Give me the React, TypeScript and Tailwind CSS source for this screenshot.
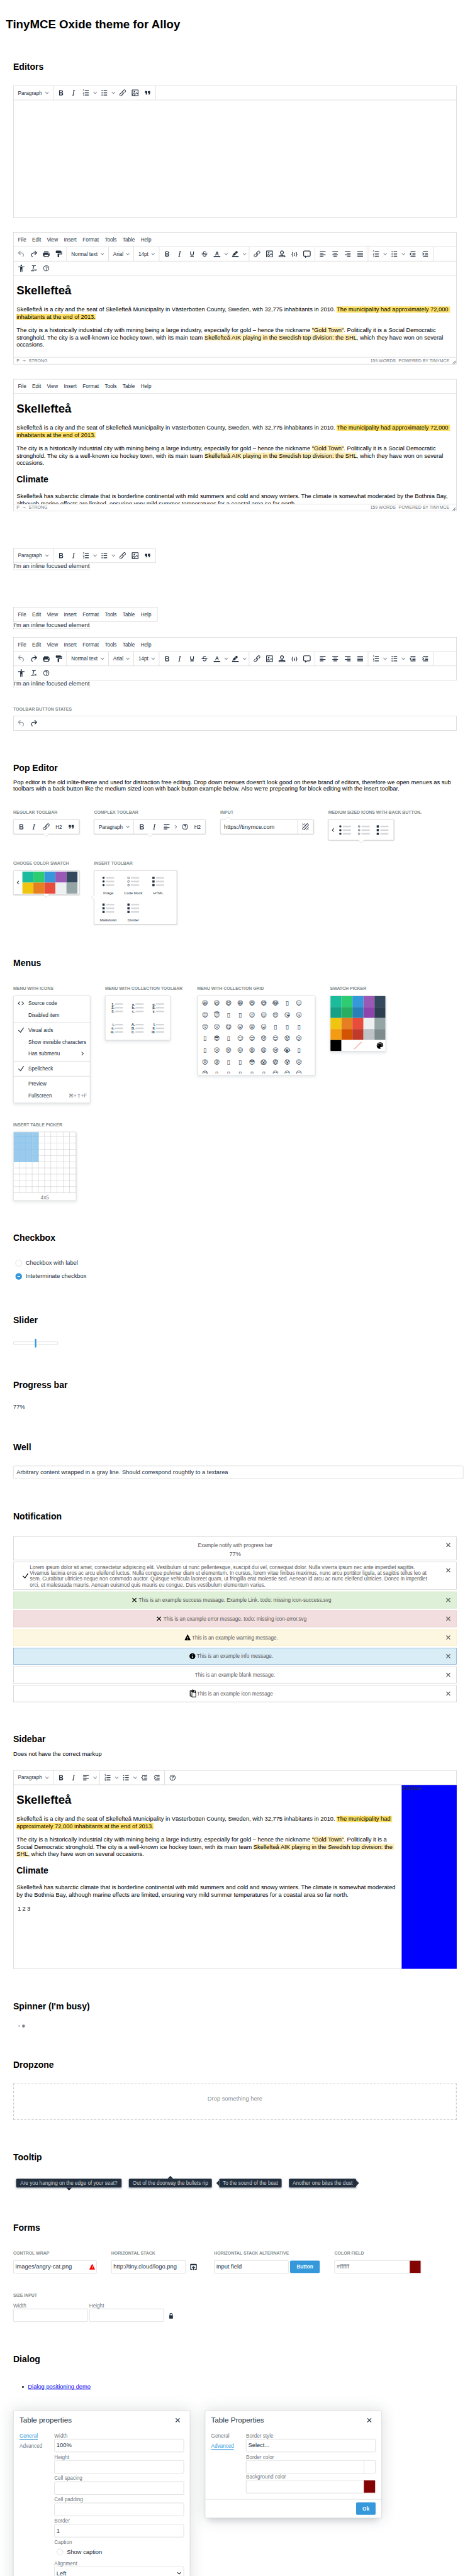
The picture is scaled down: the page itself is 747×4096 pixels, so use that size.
import React from "react";

const INK = "text-[#222f3e]";

/* ---------- icons ---------- */

const PATHS: Record<string, string> = {
  bold: "M7.8 19c-.3 0-.5 0-.6-.2l-.2-.5V5.7c0-.2 0-.4.2-.5l.6-.2h5c1.5 0 2.7.3 3.5 1 .7.6 1.1 1.4 1.1 2.5a3 3 0 01-.6 1.9c-.4.6-1 1-1.6 1.2.4.1.9.3 1.3.6s.8.7 1 1.2c.4.4.5 1 .5 1.6 0 1.3-.4 2.3-1.3 3-.8.7-2.1 1-3.8 1H7.8zm5-8.3c.6 0 1.2-.1 1.6-.5.4-.3.6-.7.6-1.3 0-1.1-.8-1.7-2.3-1.7H9.3v3.5h3.4zm.5 6c.7 0 1.3-.1 1.7-.4.4-.4.6-.9.6-1.5s-.2-1-.7-1.4c-.4-.3-1-.4-2-.4H9.4v3.8h4z",
  italic: "M16.7 4.7l-.1.9h-.3c-.6 0-1 0-1.4.3-.3.3-.4.6-.5 1.1l-2.1 9.8v.6c0 .5.4.8 1.4.8h.2l-.2.8H8l.2-.8h.2c1.1 0 1.8-.5 2-1.5l2-9.8.1-.5c0-.6-.4-.8-1.4-.8h-.3l.2-.9h5.8z",
  underline: "M16 5c.6 0 1 .4 1 1v5.5a4 4 0 01-.4 1.8l-1 1.4a5.3 5.3 0 01-5.5 1 5 5 0 01-1.6-1c-.5-.4-.8-.9-1.1-1.4a4 4 0 01-.4-1.8V6c0-.6.4-1 1-1s1 .4 1 1v5.5c0 .3 0 .6.2 1l.6.7a3.3 3.3 0 002.2.8 3.4 3.4 0 002.2-.8c.3-.2.4-.5.6-.8l.2-.9V6c0-.6.4-1 1-1zM8 17h8c.6 0 1 .4 1 1s-.4 1-1 1H8a1 1 0 010-2z",
  strike: "M15.6 8.5c-.5-.7-1-1.1-1.3-1.3-.6-.4-1.3-.6-2-.6-2.7 0-2.8 1.7-2.8 2.1 0 1.6 1.8 2 3.2 2.3 4.4.9 4.6 2.8 4.6 3.9 0 1.4-.7 4.1-5 4.1A6.2 6.2 0 017 16.4l1.5-1.1c.4.6 1.6 2 3.7 2 1.6 0 2.5-.4 3-1.2.4-.8.3-2-.8-2.6-.7-.4-1.6-.7-2.9-1-1-.2-3.9-.8-3.9-3.6C7.6 6 10.3 5 12.4 5c2.9 0 4.2 1.6 4.7 2.4l-1.5 1.1zM5 11h14a1 1 0 010 2H5a1 1 0 010-2z",
  left: "M5 5h14a1 1 0 010 2H5a1 1 0 010-2zm0 4h8a1 1 0 010 2H5a1 1 0 010-2zm0 8h8a1 1 0 010 2H5a1 1 0 010-2zm0-4h14a1 1 0 010 2H5a1 1 0 010-2z",
  center: "M5 5h14a1 1 0 010 2H5a1 1 0 010-2zm3 4h8a1 1 0 010 2H8a1 1 0 010-2zm0 8h8a1 1 0 010 2H8a1 1 0 010-2zm-3-4h14a1 1 0 010 2H5a1 1 0 010-2z",
  right: "M5 5h14a1 1 0 010 2H5a1 1 0 010-2zm6 4h8a1 1 0 010 2h-8a1 1 0 010-2zm0 8h8a1 1 0 010 2h-8a1 1 0 010-2zm-6-4h14a1 1 0 010 2H5a1 1 0 010-2z",
  justify: "M5 5h14a1 1 0 010 2H5a1 1 0 010-2zm0 4h14a1 1 0 010 2H5a1 1 0 010-2zm0 4h14a1 1 0 010 2H5a1 1 0 010-2zm0 4h14a1 1 0 010 2H5a1 1 0 010-2z",
  ul: "M11 5h8a1 1 0 010 2h-8a1 1 0 010-2zm0 6h8a1 1 0 010 2h-8a1 1 0 010-2zm0 6h8a1 1 0 010 2h-8a1 1 0 010-2zM4.500 6a1.500 1.500 0 103 0 1.500 1.500 0 00-3 0zm0 6a1.500 1.500 0 103 0 1.500 1.500 0 00-3 0zm0 6a1.500 1.500 0 103 0 1.500 1.500 0 00-3 0z",
  outdent: "M7 5h12a1 1 0 010 2H7a1 1 0 010-2zm5 4h7a1 1 0 010 2h-7a1 1 0 010-2zm0 4h7a1 1 0 010 2h-7a1 1 0 010-2zm-5 4h12a1 1 0 010 2H7a1 1 0 010-2zm1.400-8.400a1 1 0 01-.1 1.400l-2 2 2 2a1 1 0 11-1.400 1.400L3.500 12l3.400-3.400a1 1 0 011.500 0z",
  indent: "M7 5h12a1 1 0 010 2H7a1 1 0 010-2zm5 4h7a1 1 0 010 2h-7a1 1 0 010-2zm0 4h7a1 1 0 010 2h-7a1 1 0 010-2zm-5 4h12a1 1 0 010 2H7a1 1 0 010-2zM4.600 8.600a1 1 0 011.500 0L9.500 12l-3.400 3.400A1 1 0 114.700 14l2-2-2-2a1 1 0 01-.1-1.400z",
  undo: "M6.4 8H12c3.7 0 6.2 2 6.8 5.1.6 2.7-.4 5.6-2.3 6.8a1 1 0 01-1-1.8c1.1-.6 1.8-2.7 1.4-4.6-.5-2.1-2.1-3.5-4.9-3.5H6.4l3.3 3.3a1 1 0 11-1.4 1.4l-5-5a1 1 0 010-1.4l5-5a1 1 0 011.4 1.4L6.4 8z",
  redo: "M17.6 10H12c-2.8 0-4.4 1.4-4.9 3.5-.4 2 .3 4 1.4 4.6a1 1 0 11-1 1.8c-2-1.2-2.9-4.1-2.3-6.8.6-3 3-5.1 6.8-5.1h5.6l-3.3-3.3a1 1 0 111.4-1.4l5 5a1 1 0 010 1.4l-5 5a1 1 0 01-1.4-1.4l3.3-3.3z",
  print: "M18 8H6a3 3 0 00-3 3v6h2v3h14v-3h2v-6a3 3 0 00-3-3zm-1 10H7v-4h10v4zm.5-5c-.8 0-1.5-.7-1.5-1.5s.7-1.5 1.5-1.5 1.5.7 1.5 1.5-.7 1.5-1.5 1.5zm.5-8H6v2h12V5z",
  painter: "M18 5V4c0-.5-.4-1-1-1H5a1 1 0 00-1 1v4c0 .6.5 1 1 1h12c.6 0 1-.4 1-1V7h1v4H9v9c0 .6.4 1 1 1h2c.6 0 1-.4 1-1v-7h8V5h-3z",
  textcolor: "M3 18h18v3H3zM8.7 16h-.8a.5.5 0 01-.5-.6l2.7-9c.1-.3.3-.4.5-.4h2.8c.2 0 .4.1.5.4l2.7 9a.5.5 0 01-.5.6h-.8a.5.5 0 01-.4-.4l-.7-2.2c0-.3-.3-.4-.5-.4h-3.4c-.2 0-.4.1-.5.4l-.7 2.2c0 .3-.2.4-.4.4zm2.6-7.6l-.6 2a.5.5 0 00.5.6h1.6a.5.5 0 00.5-.6l-.6-2c0-.3-.3-.4-.5-.4h-.4c-.2 0-.4.1-.5.4z",
  highlight: "M3 18h18v3H3zM7.7 16.7H3l3.3-3.3-.7-.8L10.2 8l4 4.1-4 4.2c-.2.2-.6.2-.8 0l-.6-.7-1.1 1.1zm5-7.5L11 7.4l3-2.9a2 2 0 012.6 0L18 6c.7.7.7 2 0 2.7l-2.9 2.9-1.8-1.8-.5-.6z",
  link: "M6.2 12.3a1 1 0 011.4 1.4l-2.1 2a2 2 0 102.7 2.8l4.8-4.8a1 1 0 000-1.4 1 1 0 111.4-1.3 2.9 2.9 0 010 4L9.6 20a3.9 3.9 0 01-5.5-5.5l2-2zm11.6-.6a1 1 0 01-1.4-1.4l2-2a2 2 0 10-2.6-2.8L11 10.3a1 1 0 000 1.4A1 1 0 119.6 13a2.9 2.9 0 010-4L14.4 4a3.9 3.9 0 015.5 5.5l-2 2z",
  unlink: "M6.2 12.3a1 1 0 011.4 1.4l-2 2a2 2 0 102.6 2.8l4.8-4.8a1 1 0 000-1.4 1 1 0 111.4-1.3 2.9 2.9 0 010 4L9.6 20a3.9 3.9 0 01-5.5-5.5l2-2zm11.6-.6a1 1 0 01-1.4-1.4l2.1-2a2 2 0 10-2.7-2.8L11 10.3a1 1 0 000 1.4A1 1 0 119.6 13a2.9 2.9 0 010-4L14.4 4a3.9 3.9 0 015.5 5.5l-2 2zM7.6 6.3a.8.8 0 01-1 1.1L3.3 4.2a.7.7 0 111-1l3.2 3.1zM5.1 8.6a.8.8 0 010 1.5H3a.8.8 0 010-1.5H5zm5-3.5a.8.8 0 01-1.5 0V3a.8.8 0 011.5 0V5zm6 11.8a.8.8 0 011-1l3.2 3.2a.8.8 0 01-1 1L16 17zm-2.2 2a.8.8 0 011.5 0V21a.8.8 0 01-1.5 0V19zm5-3.5a.7.7 0 110-1.5H21a.8.8 0 010 1.5H19z",
  image: "M5 15.7l3.3-3.2c.3-.3.7-.3 1 0L12 15l4.1-4c.3-.4.8-.4 1 0l2 1.9V5H5v10.7zM5 18V19h3l2.8-2.9-2-2L5 17.9zm14-3l-2.5-2.4-6.4 6.5H19v-4zM4 3h16c.6 0 1 .4 1 1v16c0 .6-.4 1-1 1H4a1 1 0 01-1-1V4c0-.6.4-1 1-1zm6 8a2 2 0 100-4 2 2 0 000 4z",
  quote: "M7.5 17h.9c.4 0 .7-.2.9-.6L11 13V8c0-.6-.4-1-1-1H6a1 1 0 00-1 1v4c0 .6.4 1 1 1h2l-1.3 2.7a1 1 0 00.8 1.3zm8 0h.9c.4 0 .7-.2.9-.6L19 13V8c0-.6-.4-1-1-1h-4a1 1 0 00-1 1v4c0 .6.4 1 1 1h2l-1.3 2.7a1 1 0 00.8 1.3z",
  stamp: "M19 19v-1H5v1h14zM9 16v-4a5 5 0 116 0v4h4a2 2 0 012 2v3H3v-3c0-1.1.9-2 2-2h4zm4 0v-5l.8-.6a3 3 0 10-3.6 0l.8.6v5h2z",
  codesample: "M7.1 11a2.8 2.8 0 01-.8 2 2.8 2.8 0 01.8 2v1.7c0 .3.1.6.4.8.2.3.5.4.8.4.3 0 .4.2.4.4v.8c0 .2-.1.4-.4.4-.7 0-1.4-.3-2-.8-.5-.6-.8-1.3-.8-2V15c0-.3-.1-.6-.4-.8-.2-.3-.5-.4-.8-.4a.4.4 0 01-.4-.4v-.8c0-.2.2-.4.4-.4.3 0 .6-.1.8-.4.3-.2.4-.5.4-.8V9.3c0-.7.3-1.4.8-2 .6-.5 1.3-.8 2-.8.3 0 .4.2.4.4v.8c0 .2-.1.4-.4.4-.3 0-.6.1-.8.4-.3.2-.4.5-.4.8V11zm9.8 0V9.3c0-.3-.1-.6-.4-.8-.2-.3-.5-.4-.8-.4a.4.4 0 01-.4-.4V7c0-.2.1-.4.4-.4.7 0 1.4.3 2 .8.5.6.8 1.3.8 2V11c0 .3.1.6.4.8.2.3.5.4.8.4.2 0 .4.2.4.4v.8c0 .2-.2.4-.4.4-.3 0-.6.1-.8.4-.3.2-.4.5-.4.8v1.7c0 .7-.3 1.4-.8 2-.6.5-1.3.8-2 .8a.4.4 0 01-.4-.4v-.8c0-.2.1-.4.4-.4.3 0 .6-.1.8-.4.3-.2.4-.5.4-.8V15a2.8 2.8 0 01.8-2 2.8 2.8 0 01-.8-2zm-3.3-.4c0 .4-.1.8-.5 1.1-.3.3-.7.5-1.1.5-.4 0-.8-.2-1.1-.5-.4-.3-.5-.7-.5-1.1 0-.5.1-.9.5-1.2.3-.3.7-.4 1.1-.4.4 0 .8.1 1.1.4.4.3.5.7.5 1.2zM12 13c.4 0 .8.1 1.1.5.4.3.5.7.5 1.1 0 1-.1 1.6-.5 2a3 3 0 01-1.1 1c-.4.3-.8.4-1.1.4a.5.5 0 01-.5-.5V17a3 3 0 001-.2l.6-.6c-.6 0-1-.2-1.3-.5-.2-.3-.3-.7-.3-1 0-.5.1-1 .5-1.2.3-.4.7-.5 1.1-.5z",
  comment: "M9 19l3-2h7c.6 0 1-.4 1-1V6c0-.6-.4-1-1-1H5a1 1 0 00-1 1v10c0 .6.4 1 1 1h4v2zm-2 4v-4H5a3 3 0 01-3-3V6a3 3 0 013-3h14a3 3 0 013 3v10a3 3 0 01-3 3h-6.4L7 23z",
  a11y: "M12 2a2 2 0 012 2 2 2 0 01-2 2 2 2 0 01-2-2c0-1.1.9-2 2-2zm8 7h-5v12c0 .6-.4 1-1 1a1 1 0 01-1-1v-5c0-.6-.4-1-1-1a1 1 0 00-1 1v5c0 .6-.4 1-1 1a1 1 0 01-1-1V9H4a1 1 0 110-2h16c.6 0 1 .4 1 1s-.4 1-1 1z",
  clear: "M13.2 6a1 1 0 010 .2l-2.6 10a1 1 0 01-1 .8h-.2a.8.8 0 01-.8-1l2.6-10H8a1 1 0 110-2h9a1 1 0 010 2h-3.8zM5 18h7a1 1 0 010 2H5a1 1 0 010-2zm13 1.5L16.5 18 15 19.5a.7.7 0 01-1-1l1.5-1.5-1.5-1.5a.7.7 0 011-1l1.5 1.5 1.5-1.5a.7.7 0 011 1L17.5 17l1.5 1.5a.7.7 0 01-1 1z",
  help: "M12 5.5a6.5 6.5 0 00-6 9 6.3 6.3 0 001.4 2l1 1a6.3 6.3 0 003.6 1 6.5 6.5 0 006-9 6.3 6.3 0 00-1.4-2l-1-1a6.3 6.3 0 00-3.6-1zM12 4a7.8 7.8 0 015.7 2.3A8 8 0 1112 4zM9.6 9.7a.7.7 0 01-.7-.8c0-1.1 1.5-1.8 3.2-1.8 1.8 0 3.2.8 3.2 2.4 0 1.4-.4 2.1-1.5 2.8-.2 0-.3.1-.3.2a2 2 0 00-.8.8.8.8 0 01-1.4-.6c.3-.7.8-1 1.3-1.5l.4-.2c.7-.4.8-.6.8-1.5 0-.5-.6-.9-1.7-.9-.5 0-1 .1-1.4.3-.2 0-.3.1-.3.2v-.2c0 .4-.4.8-.8.8zM11 16a1 1 0 102 0 1 1 0 00-2 0z",
  check: "M18.2 5.4a1 1 0 011.6 1.2l-8 12a1 1 0 01-1.5.1l-5-5a1 1 0 111.4-1.4l4.1 4.1 7.4-11z",
  close: "M17.3 8.2L13.4 12l3.9 3.8a1 1 0 01-1.5 1.5L12 13.4l-3.8 3.9a1 1 0 01-1.5-1.5l3.9-3.8-3.9-3.8a1 1 0 011.5-1.5l3.8 3.9 3.8-3.9a1 1 0 011.5 1.5z",
  source: "M9.8 15.7c.3.3.3.8 0 1-.3.4-.9.4-1.2 0l-4.4-4.1a.8.8 0 010-1.2l4.4-4.2c.3-.3.9-.3 1.2 0 .3.3.3.8 0 1.1L6 12l3.8 3.7zM14.2 15.7c-.3.3-.3.8 0 1 .4.4.9.4 1.2 0l4.4-4.1c.3-.3.3-.9 0-1.2l-4.4-4.2a.8.8 0 00-1.2 0c-.3.3-.3.8 0 1.1L18 12l-3.8 3.7z",
  warning: "M19.8 18.3c.2.5.3.9 0 1.2-.1.3-.5.5-1 .5H5.2c-.5 0-.9-.2-1-.5-.3-.3-.2-.7 0-1.2L11 4.7l.5-.5.5-.2c.2 0 .3 0 .5.2.2 0 .3.3.5.5l6.8 13.6zM12 18c.3 0 .5-.1.7-.3.2-.2.3-.4.3-.7a1 1 0 00-.3-.7 1 1 0 00-.7-.3 1 1 0 00-.7.3 1 1 0 00-.3.7c0 .3.1.5.3.7.2.2.4.3.7.3zm.7-3l.3-4a1 1 0 00-.3-.7 1 1 0 00-.7-.3 1 1 0 00-.7.3 1 1 0 00-.3.7l.3 4h1.4z",
  info: "M12 4a7.8 7.8 0 015.7 2.3A8 8 0 1112 4zm-1 3v2h2V7h-2zm3 10v-1h-1v-5h-3v1h1v4h-1v1h4z",
  paste: "M18 9V5h-2v1c0 .6-.4 1-1 1H9a1 1 0 01-1-1V5H6v13h3V9h9zM9 20H6a2 2 0 01-2-2V5c0-1.1.9-2 2-2h3.2A3 3 0 0112 1a3 3 0 012.8 2H18a2 2 0 012 2v4h1v12.1c0 .5-.4.9-.9.9h-10a1 1 0 01-1-1V20zm1.5-9.5v9.9h9v-9.9h-9zM12 3a1 1 0 00-1 1c0 .5.4 1 1 1s1-.5 1-1-.4-1-1-1z",
  browse: "M19 4a2 2 0 012 2v12a2 2 0 01-2 2h-4v-2h4V8H5v10h4v2H5a2 2 0 01-2-2V6c0-1.1.9-2 2-2h14zm-8 9.4l-2.3 2.3a1 1 0 11-1.4-1.4l4-4a1 1 0 011.4 0l4 4a1 1 0 01-1.4 1.4L13 13.4V20a1 1 0 01-2 0v-6.6z",
  lock: "M16.3 11c.2 0 .3 0 .5.2l.2.6v7.4c0 .3 0 .4-.2.6l-.6.2H7.8c-.3 0-.4 0-.6-.2a.7.7 0 01-.2-.6v-7.4c0-.3 0-.4.2-.6l.5-.2H8V8c0-.8.3-1.5.9-2.1.6-.6 1.3-.9 2.1-.9h2c.8 0 1.5.3 2.1.9.6.6.9 1.3.9 2.1v3h.3zM10 8v3h4V8a1 1 0 00-.3-.7A1 1 0 0013 7h-2a1 1 0 00-.7.3 1 1 0 00-.3.7z",
  palette: "M12 3a9 9 0 000 18 1.5 1.5 0 001.1-2.5c-.2-.3-.4-.6-.4-1 0-.8.7-1.5 1.5-1.5H16a5 5 0 005-5c0-4.4-4-8-9-8zm-5.500 9a1.500 1.500 0 110-3 1.500 1.500 0 010 3zm3-4a1.500 1.500 0 110-3 1.500 1.500 0 010 3zm5 0a1.500 1.500 0 110-3 1.500 1.500 0 010 3zm3 4a1.500 1.500 0 110-3 1.500 1.500 0 010 3z",
};

const SOLID = ["close", "link", "unlink", "strike"];

function Icon({ name, className = "" }: { name: string; className?: string }) {
  if (name === "ol") {
    return (
      <svg width="24" height="24" viewBox="0 0 24 24" fill="currentColor" className={className}>
        <path d="M10 5h9a1 1 0 010 2h-9a1 1 0 010-2zm0 6h9a1 1 0 010 2h-9a1 1 0 010-2zm0 6h9a1 1 0 010 2h-9a1 1 0 010-2z" />
        <g fontSize="6.5" fontWeight="700" fontFamily="Liberation Sans">
          <text x="4" y="8">1</text>
          <text x="4" y="14.3">2</text>
          <text x="4" y="20.6">3</text>
        </g>
      </svg>
    );
  }
  return (
    <svg width="24" height="24" viewBox="0 0 24 24" fill="currentColor" className={className}>
      <path d={PATHS[name]} fillRule={SOLID.includes(name) ? "nonzero" : "evenodd"} />
    </svg>
  );
}

function Chevron({ dir = "down", className = "" }: { dir?: "down" | "left" | "right"; className?: string }) {
  const turn = dir === "down" ? "" : dir === "left" ? "rotate-90" : "-rotate-90";
  return (
    <svg width="10" height="10" viewBox="0 0 10 10" fill="currentColor" className={`shrink-0 ${turn} ${className}`}>
      <path d="M8.7 2.2c.3-.3.8-.3 1 0 .4.4.4.9 0 1.2L5.7 7.8c-.3.3-.9.3-1.2 0L.2 3.4a.8.8 0 010-1.2c.3-.3.8-.3 1.1 0L5 6l3.7-3.8z" />
    </svg>
  );
}

function ListIcon({ kind, marks }: { kind: "disc" | "circle" | "square" | "text"; marks?: string[] }) {
  return (
    <svg width="48" height="48" viewBox="0 0 48 48" className="shrink-0 fill-[#222f3e]">
      {[14, 24, 34].map((y, i) => (
        <g key={y}>
          <rect x="18" y={y - 2} width="22" height="4" opacity=".2" />
          {kind === "disc" && <circle cx="11" cy={y} r="3" />}
          {kind === "circle" && <circle cx="11" cy={y} r="2.4" fill="none" stroke="#222f3e" strokeWidth="1.1" />}
          {kind === "square" && <rect x="8" y={y - 3} width="6" height="6" />}
          {kind === "text" && (
            <text x="16.6" y={y + 3.6} textAnchor="end" fontSize="9.5" fontWeight="700" fontFamily="Liberation Sans">
              {marks![i]}
            </text>
          )}
        </g>
      ))}
    </svg>
  );
}

/* ---------- toolbar pieces ---------- */

function Btn({ icon, dim }: { icon: string; dim?: boolean }) {
  return (
    <span className={`flex w-[34px] shrink-0 items-center justify-center ${dim ? "opacity-50" : ""}`}>
      <Icon name={icon} />
    </span>
  );
}

function Split({ icon, dir = "down" }: { icon: string; dir?: "down" | "right" }) {
  return (
    <>
      <Btn icon={icon} />
      <span className="flex w-4 shrink-0 items-center justify-center">
        <Chevron dir={dir} className="opacity-60" />
      </span>
    </>
  );
}

function Select({ label, className }: { label: string; className: string }) {
  return (
    <span className={`flex shrink-0 items-center justify-between pr-[7px] pl-2 text-[14px] ${className}`}>
      {label}
      <Chevron className="opacity-60" />
    </span>
  );
}

function Group({ children, last }: { children: React.ReactNode; last?: boolean }) {
  return <div className={`flex shrink-0 px-1 ${last ? "" : "border-r border-[#ccc]"}`}>{children}</div>;
}

function Row({ children, className = "border-b" }: { children: React.ReactNode; className?: string }) {
  return <div className={`flex h-[39px] shrink-0 border-[#ccc] ${className}`}>{children}</div>;
}

const MENUS = ["File", "Edit", "View", "Insert", "Format", "Tools", "Table", "Help"];

function Menubar() {
  return (
    <Row>
      <div className="flex items-center gap-4 px-3 text-[14px]">
        {MENUS.map((m) => (
          <span key={m}>{m}</span>
        ))}
      </div>
    </Row>
  );
}

function SimpleGroups({ last }: { last?: boolean }) {
  return (
    <>
      <Group>
        <Select label="Paragraph" className="w-[99px]" />
      </Group>
      <Group last={last}>
        <Btn icon="bold" />
        <Btn icon="italic" />
        <Split icon="ol" />
        <Split icon="ul" />
        <Btn icon="link" />
        <Btn icon="image" />
        <Btn icon="quote" />
      </Group>
    </>
  );
}

function FullToolbar() {
  return (
    <>
      <Row>
        <Group>
          <Btn icon="undo" dim />
          <Btn icon="redo" />
          <Btn icon="print" />
          <Btn icon="painter" />
        </Group>
        <Group>
          <Select label="Normal text" className="w-[105px]" />
        </Group>
        <Group>
          <Select label="Arial" className="w-[60px]" />
        </Group>
        <Group>
          <Select label="14pt" className="w-[60px]" />
        </Group>
        <Group>
          <Btn icon="bold" />
          <Btn icon="italic" />
          <Btn icon="underline" />
          <Btn icon="strike" />
          <Split icon="textcolor" />
          <Split icon="highlight" />
        </Group>
        <Group>
          <Btn icon="link" />
          <Btn icon="image" />
          <Btn icon="stamp" />
          <Btn icon="codesample" />
          <Btn icon="comment" />
        </Group>
        <Group>
          <Btn icon="left" />
          <Btn icon="center" />
          <Btn icon="right" />
          <Btn icon="justify" />
        </Group>
        <Group>
          <Split icon="ol" />
          <Split icon="ul" />
          <Btn icon="outdent" />
          <Btn icon="indent" />
        </Group>
      </Row>
      <Row>
        <Group last>
          <Btn icon="a11y" />
          <Btn icon="clear" />
          <Btn icon="help" />
        </Group>
      </Row>
    </>
  );
}

function Statusbar() {
  return (
    <div className="flex h-[19px] shrink-0 items-center border-t border-[#ccc] pl-2 text-[12px] leading-[18px] text-[#222f3e]/70">
      <span>P</span>
      <svg width="10" height="8" viewBox="0 0 10 8" className="mr-[7px] ml-2 fill-none stroke-current">
        <path d="M1 4h7M6 2l2 2-2 2" />
      </svg>
      <span className="grow">STRONG</span>
      <span>159 WORDS</span>
      <span className="ml-2">POWERED BY TINYMCE</span>
      <svg width="10" height="10" viewBox="0 0 10 10" className="mr-px ml-2 self-end fill-current">
        <path d="M8.1 1.1A.5.5 0 119 2l-7 7A.5.5 0 111 8l7-7zM8.1 5.1A.5.5 0 119 6l-3 3A.5.5 0 115 8l3-3z" />
      </svg>
    </div>
  );
}

function Mark({ soft, children }: { soft?: boolean; children: React.ReactNode }) {
  return <span className={soft ? "bg-[#ffefb8]" : "bg-[#ffe168]"}>{children}</span>;
}

function Article({ narrow, climate }: { narrow?: boolean; climate?: boolean }) {
  return (
    <div className="min-w-0 grow overflow-hidden pl-2 text-[16px] leading-[20px] whitespace-nowrap text-black">
      <h1 className="mt-[20px] text-[32px] leading-[40px] font-bold">Skellefteå</h1>
      <p className="mt-[23px]">
        Skellefteå is a city and the seat of Skellefteå Municipality in Västerbotten County, Sweden, with 32,775
        inhabitants in 2010.{" "}
        {narrow ? (
          <Mark>
            The municipality had&nbsp;
            <br />
            approximately 72,000 inhabitants at the end of 2013.
          </Mark>
        ) : (
          <Mark>
            The municipality had approximately 72,000&nbsp;
            <br />
            inhabitants at the end of 2013.
          </Mark>
        )}
      </p>
      <p className="mt-4">
        The city is a historically industrial city with mining being a large industry, especially for gold – hence the
        nickname <Mark soft>"Gold Town"</Mark>. Politically it is a{" "}
        {narrow ? (
          <>
            <br />
            Social Democratic stronghold. The city is a well-known ice hockey town, with its main team{" "}
            <Mark soft>
              Skellefteå AIK playing in the Swedish top division: the&nbsp;
              <br />
              SHL
            </Mark>
            , which they have won on several occasions.
          </>
        ) : (
          <>
            Social Democratic
            <br />
            stronghold. The city is a well-known ice hockey town, with its main team{" "}
            <Mark soft>Skellefteå AIK playing in the Swedish top division: the SHL</Mark>, which they have won on
            several
            <br />
            occasions.
          </>
        )}
      </p>
      {climate && (
        <>
          <h2 className="mt-[20px] text-[24px] leading-[30px] font-bold">Climate</h2>
          <p className="mt-[20px]">
            Skellefteå has subarctic climate that is borderline continental with mild summers and cold and snowy
            winters. The climate is somewhat moderated
            {narrow && <br />} by the Bothnia Bay,
            {!narrow && <br />} although marine effects are limited, ensuring very mild summer temperatures for a
            coastal area so far north.
          </p>
        </>
      )}
      {narrow && (
        <div className="mt-[19px] flex gap-1 pl-[3px]">
          <span>1</span>
          <span>2</span>
          <span>3</span>
        </div>
      )}
    </div>
  );
}

function InlineText() {
  return (
    <div className="h-[19px] w-[208px] border-x border-b border-dotted border-[#bbb] text-[16px] leading-[18px] whitespace-nowrap">
      I'm an inline focused element
    </div>
  );
}

function H2({ children }: { children: React.ReactNode }) {
  return <h2 className="h-[30px] text-[24px] leading-[30px] font-bold text-black">{children}</h2>;
}

function Label({ children }: { children: React.ReactNode }) {
  return (
    <div className="h-4 text-[12px] leading-4 font-bold tracking-[-0.08px] whitespace-nowrap text-[#7f8c8d] uppercase">
      {children}
    </div>
  );
}

/* ---------- pop-ups ---------- */

function Pop({
  children,
  className,
  arrow,
}: {
  children: React.ReactNode;
  className: string;
  arrow: "down" | "up" | "left";
}) {
  const place =
    arrow === "down"
      ? "left-1/2 -ml-[9px] top-full -mt-px"
      : arrow === "up"
        ? "left-[11px] bottom-full -mb-px rotate-180"
        : "top-1/2 -mt-[5px] -left-[13px] rotate-90";
  return (
    <div
      className={`relative flex rounded-[3px] border border-[#ccc] bg-white shadow-[0_1px_3px_rgba(0,0,0,0.15)] ${className}`}
    >
      {children}
      <svg width="18" height="10" viewBox="0 0 18 10" className={`absolute fill-white stroke-[#ccc] ${place}`}>
        <path d="M0 0h18L9 9z" stroke="none" />
        <path d="M.5 .5L9 9l8.500-8.500" fill="none" />
      </svg>
    </div>
  );
}

function Card({ children, className }: { children: React.ReactNode; className: string }) {
  return (
    <div className={`rounded-[3px] border border-[#ccc] bg-white shadow-[0_4px_8px_0_rgba(34,47,62,0.1)] ${className}`}>
      {children}
    </div>
  );
}

function Swatch({ className, children }: { className: string; children?: React.ReactNode }) {
  return <span className={`flex h-[30px] w-[30px] items-center justify-center ${className}`}>{children}</span>;
}

const ROW1 = ["bg-[#1abc9c]", "bg-[#2ecc71]", "bg-[#3498db]", "bg-[#9b59b6]", "bg-[#34495e]"];
const ROW2 = ["bg-[#16a085]", "bg-[#27ae60]", "bg-[#2980b9]", "bg-[#8e44ad]", "bg-[#2c3e50]"];
const ROW3 = ["bg-[#f1c40f]", "bg-[#e67e22]", "bg-[#e74c3c]", "bg-[#ecf0f1]", "bg-[#95a5a6]"];
const ROW4 = ["bg-[#f39c12]", "bg-[#d35400]", "bg-[#c0392b]", "bg-[#bdc3c7]", "bg-[#7f8c8d]"];

function InsertItem({ label, kind }: { label: string; kind: "disc" | "circle" | "square" }) {
  return (
    <div className="flex h-[73px] w-[68px] flex-col items-center">
      <ListIcon kind={kind} />
      <span className="mt-0.5 text-[10px] leading-3">{label}</span>
    </div>
  );
}

function MenuItem({ icon, label, extra }: { icon?: string; label: string; extra?: React.ReactNode }) {
  return (
    <div className="flex h-8 items-center pr-2 pl-2 text-[14px]">
      <span className="flex w-6 shrink-0">{icon && <Icon name={icon} />}</span>
      <span className="ml-2 grow whitespace-nowrap">{label}</span>
      {extra}
    </div>
  );
}

/* ▯ stands in for the faces that the monochrome font has no glyph for. */
const EMOJI = [
  "😀 😃 😄 😁 😆 😅 😂 ▯ ☺",
  "😊 😇 ▯ ▯ 😉 😌 😍 😘 😗",
  "😙 😚 😋 😜 😝 😛 ▯ ▯ ▯",
  "▯ 😎 ▯ 😏 😒 😞 😔 😟 😕",
  "▯ ☹ 😣 😖 😫 😩 😢 😭 ▯",
  "😠 😡 ▯ ▯ 😳 😱 😨 😰 😥",
  "😓 ▯ ▯ ▯ ▯ ▯ 😶 😐 😑",
].map((r) => r.split(" "));

/* ---------- notifications ---------- */

function Note({ icon, text, className }: { icon?: string; text: string; className: string }) {
  return (
    <div className={`mt-[5px] flex h-[46px] items-center border text-[14px] text-[#595959] ${className}`}>
      <div className={`flex grow items-center justify-center ${icon ? "pl-[10px]" : "pl-[34px]"}`}>
        {icon && <Icon name={icon} className="text-black" />}
        {text}
      </div>
      <Icon name="close" className="mr-[10px] shrink-0" />
    </div>
  );
}

/* ---------- forms ---------- */

function Field({ className = "", children }: { className?: string; children?: React.ReactNode }) {
  return (
    <div
      className={`flex h-9 items-center rounded-[3px] border border-[#ccc] bg-white pl-[5px] text-[16px] whitespace-nowrap ${className}`}
    >
      {children}
    </div>
  );
}

function DLabel({ children }: { children: React.ReactNode }) {
  return <div className="h-[18px] text-[14px] leading-[18px] text-[#222f3e]/70">{children}</div>;
}

function Dialog({
  title,
  active,
  className,
  children,
  footer,
}: {
  title: string;
  active: "General" | "Advanced";
  className: string;
  children: React.ReactNode;
  footer?: React.ReactNode;
}) {
  return (
    <div
      className={`flex w-[482px] flex-col rounded-[3px] border border-[#ccc] bg-white shadow-[0_16px_16px_-10px_rgba(34,47,62,0.15),0_0_40px_1px_rgba(34,47,62,0.15)] ${className}`}
    >
      <div className="flex h-[50px] shrink-0 items-center justify-between pr-[21px] pl-4 text-[20px]">
        {title}
        <Icon name="close" />
      </div>
      <div className="flex pt-2 pr-4 pl-4">
        <div className="flex w-[95px] flex-col items-start text-[14px] leading-[18px]">
          {["General", "Advanced"].map((t) => (
            <span
              key={t}
              className={`mb-2 border-b-2 ${
                t === active ? "border-[#3498db] text-[#3498db]" : "border-transparent text-[#222f3e]/70"
              }`}
            >
              {t}
            </span>
          ))}
        </div>
        <div className="grow">{children}</div>
      </div>
      {footer}
    </div>
  );
}

const TABLE_CELLS = Array.from({ length: 100 }, (_, i) => i);

export default function App() {
  return (
    <div className="h-[4096px] w-[747px] overflow-hidden bg-white">
      <div
        className={`h-[7020px] w-[1280px] origin-top-left scale-[0.58352] overflow-hidden bg-white pl-9 font-['Liberation_Sans',Arial,sans-serif] ${INK}`}
      >
        <header className="h-[168px] pt-[46px]">
          <h1 className="-ml-5 text-[32px] leading-[40px] font-bold text-black">TinyMCE Oxide theme for Alloy</h1>
        </header>

        <section className="h-[1910px] w-[1208px]">
          <H2>Editors</H2>
          <div className="mt-[35px] h-[360px] border border-[#ccc]">
            <Row>
              <SimpleGroups />
            </Row>
          </div>

          <div className="mt-10 flex h-[360px] flex-col border border-[#ccc]">
            <Menubar />
            <FullToolbar />
            <Article />
            <Statusbar />
          </div>

          <div className="mt-10 flex h-[360px] flex-col border border-[#ccc]">
            <Menubar />
            <Article climate />
            <Statusbar />
          </div>

          <div className="mt-[101px] w-[388px] border-x border-t border-[#ccc]">
            <Row>
              <SimpleGroups last />
            </Row>
          </div>
          <InlineText />

          <div className="mt-[101px] w-[393px] border-x border-t border-[#ccc]">
            <Menubar />
          </div>
          <InlineText />

          <div className="mt-[23px] border-x border-t border-[#ccc]">
            <Menubar />
            <FullToolbar />
          </div>
          <InlineText />

          <div className="mt-[51px]">
            <Label>Toolbar button states</Label>
          </div>
          <div className="mt-[11px] border-x border-t border-[#ccc]">
            <Row>
              <Group last>
                <Btn icon="undo" dim />
                <Btn icon="redo" />
              </Group>
            </Row>
          </div>
        </section>

        <section className="h-[532px]">
          <H2>Pop Editor</H2>
          <p className="mt-[15px] text-[16px] leading-[18px] whitespace-nowrap text-black">
            Pop editor is the old inlite-theme and used for distraction free editing. Drop down menues doesn't look good
            on these brand of editors, therefore we open menues as sub
            <br />
            toolbars with a back button like the medium sized icon with back button example below. Also we're
            prepearing for block editing with the insert toolbar.
          </p>
          <div className="mt-[47px] flex h-[139px] gap-10">
            <div className="w-[180px]">
              <Label>Regular toolbar</Label>
              <Pop arrow="down" className="mt-[11px] h-10 px-1">
                <Btn icon="bold" />
                <Btn icon="italic" />
                <Btn icon="link" />
                <span className="flex w-[34px] items-center justify-center text-[14px]">H2</span>
                <Btn icon="quote" />
              </Pop>
            </div>
            <div className="w-[304px]">
              <Label>Complex toolbar</Label>
              <Pop arrow="down" className="mt-[11px] h-10">
                <Group>
                  <Select label="Paragraph" className="w-[99px]" />
                </Group>
                <Group last>
                  <Btn icon="bold" />
                  <Btn icon="italic" />
                  <Split icon="left" dir="right" />
                  <Btn icon="help" />
                  <span className="flex w-[34px] items-center justify-center text-[14px]">H2</span>
                </Group>
              </Pop>
            </div>
            <div className="w-[254px]">
              <Label>Input</Label>
              <Pop arrow="up" className="mt-[11px] h-10">
                <span className="flex w-[210px] items-center border-r border-[#ccc] pl-[9px] text-[16px]">
                  https://tinymce.com
                </span>
                <span className="flex w-[42px] items-center justify-center">
                  <Icon name="unlink" />
                </span>
              </Pop>
            </div>
            <div className="w-[179px]">
              <Label>Medium sized icons with back button.</Label>
              <Pop arrow="down" className="mt-[11px] h-[57px] items-center gap-[3px] pl-[7px]">
                <Chevron dir="left" className="mr-px" />
                <ListIcon kind="disc" />
                <ListIcon kind="circle" />
                <ListIcon kind="square" />
              </Pop>
            </div>
          </div>
          <div className="flex gap-10">
            <div className="w-[180px]">
              <Label>Choose color swatch</Label>
              <Pop arrow="down" className="mt-[11px] h-[66px] items-center pl-[7px]">
                <Chevron dir="left" className="mr-[7px]" />
                <span className="flex w-[150px] flex-wrap">
                  {[...ROW1, ...ROW3].map((c) => (
                    <Swatch key={c} className={c} />
                  ))}
                </span>
              </Pop>
            </div>
            <div className="w-[226px]">
              <Label>Insert toolbar</Label>
              <Pop arrow="left" className="mt-[11px] h-[147px] flex-wrap content-start pt-[5px] pl-1">
                <InsertItem label="Image" kind="disc" />
                <InsertItem label="Code block" kind="circle" />
                <InsertItem label="HTML" kind="square" />
                <InsertItem label="Markdown" kind="square" />
                <InsertItem label="Divider" kind="square" />
              </Pop>
            </div>
          </div>
        </section>

        <section className="h-[749px]">
          <H2>Menus</H2>
          <div className="mt-[46px] flex h-[371px] items-start">
            <div className="w-[250px]">
              <Label>Menu with icons</Label>
              <Card className="mt-[11px] w-[210px]">
                <div className="border-b border-[#ccc] py-1">
                  <MenuItem icon="source" label="Source code" />
                  <MenuItem label="Disabled item" />
                </div>
                <div className="border-b border-[#ccc] py-1">
                  <MenuItem icon="check" label="Visual aids" />
                  <MenuItem label="Show invisible characters" />
                  <MenuItem label="Has submenu" extra={<Chevron dir="right" className="mr-[7px]" />} />
                </div>
                <div className="border-b border-[#ccc] py-1">
                  <MenuItem icon="check" label="Spellcheck" />
                </div>
                <div className="py-1">
                  <MenuItem label="Preview" />
                  <MenuItem label="Fullscreen" extra={<span className="text-[#222f3e]/70">⌘+⇧+F</span>} />
                </div>
              </Card>
            </div>
            <div className="w-[251px]">
              <Label>Menu with collection toolbar</Label>
              <Card className="mt-[11px] flex h-[122px] w-[178px] flex-wrap gap-2 p-2">
                <ListIcon kind="text" marks={["1.", "2.", "3."]} />
                <ListIcon kind="text" marks={["a.", "b.", "c."]} />
                <ListIcon kind="text" marks={["α.", "β.", "γ."]} />
                <ListIcon kind="text" marks={["i.", "ii.", "iii."]} />
                <ListIcon kind="text" marks={["A.", "B.", "C."]} />
                <ListIcon kind="text" marks={["I.", "II.", "III."]} />
              </Card>
            </div>
            <div className="w-[362px]">
              <Label>Menu with collection grid</Label>
              <Card className="mt-[11px] h-[218px] w-[322px] overflow-hidden pt-1 pb-1 pl-1">
                <div className="flex h-[208px] flex-wrap content-start overflow-hidden pr-[24px]">
                  {EMOJI.flat().map((e, i) => (
                    <span
                      key={i}
                      className="flex h-8 w-8 items-center justify-center font-['DejaVu_Sans',sans-serif] text-[16px] leading-8"
                    >
                      {e}
                    </span>
                  ))}
                </div>
              </Card>
            </div>
            <div className="w-[152px]">
              <Label>Swatch picker</Label>
              <Card className="mt-[11px] flex h-[152px] w-[152px] flex-wrap overflow-hidden">
                {[...ROW1, ...ROW2, ...ROW3, ...ROW4].map((c) => (
                  <Swatch key={c} className={c} />
                ))}
                <Swatch className="bg-black" />
                <Swatch className="bg-white" />
                <Swatch className="bg-white">
                  <svg width="30" height="30" viewBox="0 0 30 30" className="stroke-[#e74c3c]">
                    <path d="M5 25L25 5" strokeWidth="1.5" />
                  </svg>
                </Swatch>
                <Swatch className="bg-white" />
                <Swatch className="bg-white text-black">
                  <Icon name="palette" />
                </Swatch>
              </Card>
            </div>
          </div>
          <div className="w-[172px]">
            <Label>Insert table picker</Label>
            <Card className="mt-[11px] h-[188px] overflow-hidden">
              <div className="-mt-1 grid w-[170px] grid-cols-10">
                {TABLE_CELLS.map((i) => (
                  <span
                    key={i}
                    className={
                      i % 10 < 4 && i < 50
                        ? "h-[17px] border-r border-b border-[#67b1e4] bg-[#9acbed]"
                        : "h-[17px] border-r border-b border-[#ccc]"
                    }
                  />
                ))}
              </div>
              <div className="text-center text-[14px] leading-[24px] text-[#222f3e]/70">4x5</div>
            </Card>
          </div>
        </section>

        <section className="h-[224px]">
          <H2>Checkbox</H2>
          <div className="mt-[35px] flex h-9 items-center pl-[6px] text-[16px]">
            <span className="mr-[10px] h-[18px] w-[18px] rounded-full border border-[#ccc]" />
            Checkbox with label
          </div>
          <div className="flex h-9 items-center pl-[6px] text-[16px]">
            <span className="mr-[10px] flex h-[18px] w-[18px] items-center justify-center rounded-full bg-[#3498db]">
              <span className="h-[2px] w-2 rounded bg-white" />
            </span>
            Inteterminate checkbox
          </div>
        </section>

        <section className="h-[176px]">
          <H2>Slider</H2>
          <div className="mt-[35px] flex h-6 w-[122px] items-center">
            <span className="flex h-2 w-full items-center justify-center rounded-[3px] border border-[#ccc]">
              <span className="h-6 w-1 shrink-0 rounded-[2px] bg-[#3498db]" />
            </span>
          </div>
        </section>

        <section className="h-[170px]">
          <H2>Progress bar</H2>
          <div className="mt-[35px] text-[16px] leading-[18px]">77%</div>
        </section>

        <section className="h-[188px]">
          <H2>Well</H2>
          <div className="mt-[35px] h-9 w-[1226px] rounded-[3px] border border-[#ccc] px-2 text-[16px] leading-[34px]">
            Arbitrary content wrapped in a gray line. Should correspond roughtly to a textarea
          </div>
        </section>

        <section className="h-[607px] w-[1208px]">
          <H2>Notification</H2>
          <div className="mt-[40px] flex h-[64px] border border-[#c5c5c5] text-[#595959]">
            <div className="grow pt-[13px] pl-[35px] text-center text-[14px] leading-[18px]">
              Example notify with progress bar
              <div className="mt-[7px] text-[16px]">77%</div>
            </div>
            <Icon name="close" className="mt-[10px] mr-[10px]" />
          </div>
          <div className="mt-[5px] flex h-[76px] border border-[#c5c5c5] text-[14px] leading-4 whitespace-nowrap text-[#595959]">
            <Icon name="check" className="ml-[20px] self-center text-black" />
            <p className="grow pt-[5px]">
              Lorem ipsum dolor sit amet, consectetur adipiscing elit. Vestibulum ut nunc pellentesque, suscipit dui
              vel, consequat dolor. Nulla viverra ipsum nec ante imperdiet sagittis.
              <br />
              Vivamus lacinia eros ac arcu eleifend luctus. Nulla congue pulvinar diam ut elementum. In cursus, lorem
              vitae finibus maximus, nunc arcu porttitor ligula, at sagittis tellus leo at
              <br />
              sem. Curabitur ultricies neque non commodo auctor. Quisque vehicula laoreet quam, ut fringilla erat
              molestie sed. Aenean id arcu ac nunc eleifend ultricies. Donec in imperdiet
              <br />
              orci, et malesuada mauris. Aenean euismod quis mauris eu congue. Duis vestibulum elementum varius.
            </p>
            <Icon name="close" className="mt-[10px] mr-[10px] shrink-0" />
          </div>
          <Note
            icon="close"
            text="This is an example success message. Example Link. todo: missing icon-success.svg"
            className="border-[#d0e9c6] bg-[#dff0d8]"
          />
          <Note
            icon="close"
            text="This is an example error message. todo: missing icon-error.svg"
            className="border-[#ebcccc] bg-[#f2dede]"
          />
          <Note icon="warning" text="This is an example warning message." className="border-[#faecc0] bg-[#fdf7e2]" />
          <Note icon="info" text="This is an example info message." className="border-[#779ecb] bg-[#d9edf7]" />
          <Note text="This is an example blank message." className="border-[#c5c5c5]" />
          <Note icon="paste" text="This is an example icon message" className="border-[#c5c5c5]" />
        </section>

        <section className="h-[728px] w-[1208px]">
          <H2>Sidebar</H2>
          <p className="mt-[16px] text-[16px] leading-[18px] text-black">Does not have the correct markup</p>
          <div className="mt-[36px] flex h-[541px] flex-col border border-r-0 border-b-0 border-[#ccc]">
            <Row className="border-r border-b">
              <Group>
                <Select label="Paragraph" className="w-[99px]" />
              </Group>
              <Group>
                <Btn icon="bold" />
                <Btn icon="italic" />
                <Split icon="left" />
              </Group>
              <Group>
                <Split icon="ol" />
                <Split icon="ul" />
                <Btn icon="outdent" />
                <Btn icon="indent" />
              </Group>
              <Group last>
                <Btn icon="help" />
              </Group>
            </Row>
            <div className="flex grow">
              <div className="flex grow border-b border-[#ccc]">
                <Article narrow climate />
              </div>
              <div className="w-[150px] shrink-0 bg-[#0000ff] text-[16px] leading-[18px]">Sidebar</div>
            </div>
          </div>
        </section>

        <section className="h-[160px]">
          <H2>Spinner (I'm busy)</H2>
          <div className="mt-[35px] flex h-2 items-center text-[#222f3e]/60">
            <span className="ml-[3px] h-0.5 w-0.5 rounded-full bg-current opacity-30" />
            <span className="ml-[9px] h-1 w-1 rounded-full bg-current" />
            <span className="ml-[6px] h-2 w-2 rounded-full bg-current" />
          </div>
        </section>

        <section className="h-[252px] w-[1208px]">
          <H2>Dropzone</H2>
          <div className="mt-[35px] h-[100px] border-2 border-dashed border-[#ccc] pt-[31px] text-center text-[16px] leading-[18px] text-[#222f3e]/60">
            Drop something here
          </div>
        </section>

        <section className="h-[192px]">
          <H2>Tooltip</H2>
          <div className="mt-[43px] ml-2 flex gap-5 text-[14px] leading-6 text-white/75">
            <div className="relative w-[287px] rounded-[3px] bg-[#222f3e] text-center whitespace-nowrap shadow-[0_2px_4px_rgba(34,47,62,0.3)]">
              Are you hanging on the edge of your seat?
              <svg width="16" height="8" className="absolute top-full left-1/2 -ml-2 fill-[#222f3e]">
                <path d="M0 0h16L8 8z" />
              </svg>
            </div>
            <div className="relative w-[226px] rounded-[3px] bg-[#222f3e] text-center whitespace-nowrap shadow-[0_2px_4px_rgba(34,47,62,0.3)]">
              Out of the doorway the bullets rip
              <svg width="16" height="8" className="absolute bottom-full left-1/2 -ml-2 fill-[#222f3e]">
                <path d="M0 8h16L8 0z" />
              </svg>
            </div>
            <div className="relative w-[170px] rounded-[3px] bg-[#222f3e] text-center whitespace-nowrap shadow-[0_2px_4px_rgba(34,47,62,0.3)]">
              To the sound of the beat
              <svg width="8" height="16" className="absolute top-1 right-full fill-[#222f3e]">
                <path d="M8 0v16L0 8z" />
              </svg>
            </div>
            <div className="relative w-[183px] rounded-[3px] bg-[#222f3e] text-center whitespace-nowrap shadow-[0_2px_4px_rgba(34,47,62,0.3)]">
              Another one bites the dust
              <svg width="8" height="16" className="absolute top-1 left-full fill-[#222f3e]">
                <path d="M0 0v16L8 8z" />
              </svg>
            </div>
          </div>
        </section>

        <section className="h-[358px]">
          <H2>Forms</H2>
          <div className="mt-[46px] flex h-[114px]">
            <div className="w-[267px]">
              <Label>Control wrap</Label>
              <Field className="mt-[11px] w-[227px] justify-between">
                images/angry-cat.png
                <Icon name="warning" className="h-[22px] w-[22px] text-[#ff0000]" />
              </Field>
            </div>
            <div className="w-[280px]">
              <Label>Horizontal stack</Label>
              <div className="mt-[11px] flex items-center gap-[9px]">
                <Field className="w-[203px]">http://tiny.cloud/logo.png</Field>
                <Icon name="browse" />
              </div>
            </div>
            <div className="w-[328px]">
              <Label>Horizontal stack alternative</Label>
              <div className="mt-[11px] flex items-center gap-1">
                <Field className="w-[203px]">Input field</Field>
                <span className="flex h-[34px] w-[81px] items-center justify-center rounded-[3px] bg-[#3498db] text-[14px] font-bold text-white">
                  Button
                </span>
              </div>
            </div>
            <div>
              <Label>Color field</Label>
              <Field className="mt-[11px] w-[236px] justify-between overflow-hidden text-[#757575]">
                #ffffff
                <span className="h-[34px] w-[30px] bg-[#840404]" />
              </Field>
            </div>
          </div>
          <Label>Size input</Label>
          <div className="mt-[11px] flex items-end gap-1">
            <div className="w-[203px]">
              <DLabel>Width</DLabel>
              <Field />
            </div>
            <div className="w-[203px]">
              <DLabel>Height</DLabel>
              <Field />
            </div>
            <Icon name="lock" className="mb-[5px] ml-1" />
          </div>
        </section>

        <section className="h-[606px]">
          <H2>Dialog</H2>
          <ul className="mt-[51px] ml-10 list-disc text-[16px] leading-[18px] text-black">
            <li>
              <a className="text-[#0000ee] underline" href="#dialog">
                Dialog positioning demo
              </a>
            </li>
          </ul>
          <div className="mt-[56px] flex items-start gap-10">
            <Dialog title="Table properties" active="General" className="h-[700px]">
              <DLabel>Width</DLabel>
              <Field>100%</Field>
              <div className="h-1" />
              <DLabel>Height</DLabel>
              <Field />
              <div className="h-1" />
              <DLabel>Cell spacing</DLabel>
              <Field />
              <div className="h-1" />
              <DLabel>Cell padding</DLabel>
              <Field />
              <div className="h-1" />
              <DLabel>Border</DLabel>
              <Field>1</Field>
              <div className="h-1" />
              <DLabel>Caption</DLabel>
              <div className="flex h-9 items-center pl-[6px] text-[16px]">
                <span className="mr-[10px] h-[18px] w-[18px] rounded-full border border-[#ccc]" />
                Show caption
              </div>
              <div className="h-1" />
              <DLabel>Alignment</DLabel>
              <Field className="justify-between pr-[7px]">
                Left
                <Chevron className="text-black" />
              </Field>
            </Dialog>
            <Dialog
              title="Table Properties"
              active="Advanced"
              className="h-[293px]"
              footer={
                <div className="mt-4 flex justify-end border-t border-[#ccc] px-4 pt-2">
                  <span className="flex h-[34px] w-[53px] items-center justify-center rounded-[3px] bg-[#3498db] text-[14px] font-bold text-white">
                    Ok
                  </span>
                </div>
              }
            >
              <DLabel>Border style</DLabel>
              <Field>Select...</Field>
              <div className="h-1" />
              <DLabel>Border color</DLabel>
              <Field className="justify-end">
                <span className="h-[34px] w-[31px] border-l border-[#ccc]" />
              </Field>
              <DLabel>Background color</DLabel>
              <Field className="justify-end overflow-hidden">
                <span className="h-[34px] w-[31px] bg-[#840404]" />
              </Field>
            </Dialog>
          </div>
        </section>
      </div>
    </div>
  );
}
